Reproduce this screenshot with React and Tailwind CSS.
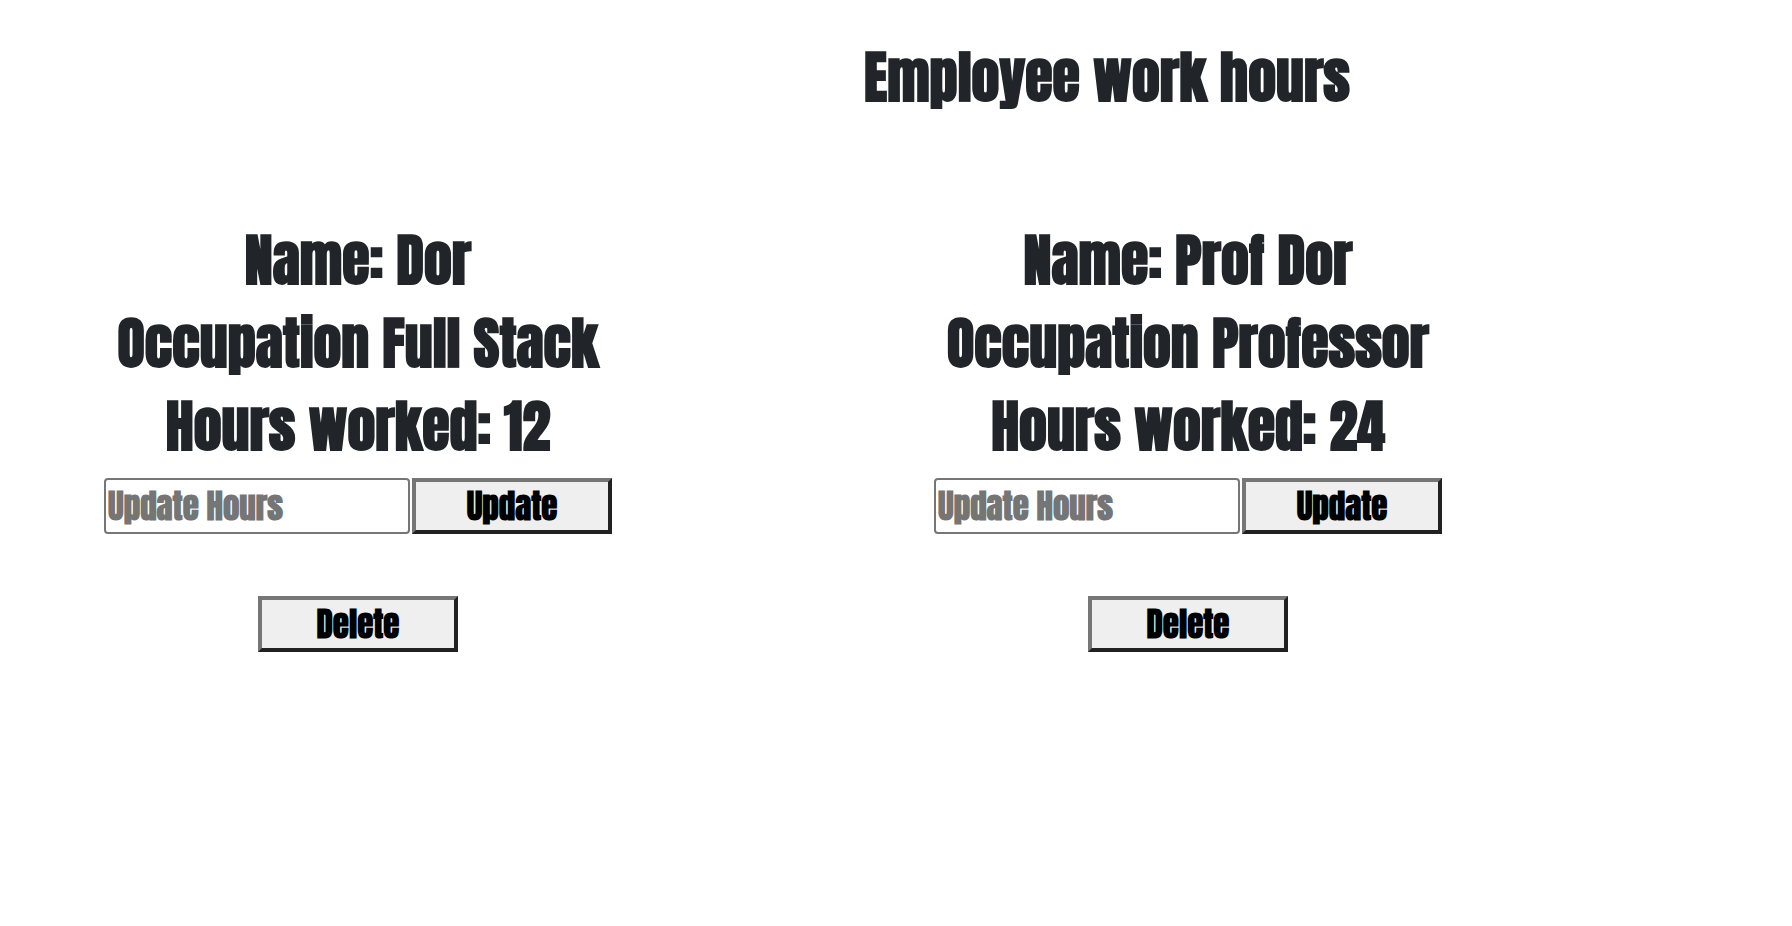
import { useState } from 'react';

const initialEmployees = [
  { id: 1, name: 'Dor', occupation: 'Full Stack', hours: 12 },
  { id: 2, name: 'Prof Dor', occupation: 'Professor', hours: 24 },
];

function ActionButton({ children, ...props }) {
  return (
    <button
      className="h-14 w-[200px] shrink-0 border-4 border-t-[#767676] border-l-[#767676] border-r-[#212121] border-b-[#212121] bg-[#efefef] text-[33px] leading-[48px] text-black"
      {...props}
    >
      {children}
    </button>
  );
}

function EmployeeCard({ employee, onUpdate, onDelete }) {
  const [value, setValue] = useState('');
  const inputId = `hours-${employee.id}`;

  const submit = (event) => {
    event.preventDefault();
    if (value !== '') onUpdate(employee.id, value);
    setValue('');
  };

  return (
    <article className="flex flex-col items-center text-center">
      <h2 className="text-[56px] leading-[83px]">Name: {employee.name}</h2>
      <h2 className="text-[56px] leading-[83px]">Occupation {employee.occupation}</h2>
      <h2 className="text-[56px] leading-[83px]">Hours worked: {employee.hours}</h2>
      <form onSubmit={submit} className="mt-2.5 flex gap-0.5">
        <input
          id={inputId}
          aria-label="Update Hours"
          placeholder="Update Hours"
          value={value}
          onChange={(event) => setValue(event.target.value)}
          className="h-14 w-[306px] rounded-[4px] border-2 border-[#767676] bg-white px-0.5 text-[33px] leading-[48px] text-black placeholder:text-[#757575]"
        />
        <ActionButton type="submit">Update</ActionButton>
      </form>
      <div className="mt-[62px]">
        <ActionButton type="button" onClick={() => onDelete(employee.id)}>
          Delete
        </ActionButton>
      </div>
    </article>
  );
}

export default function App() {
  const [employees, setEmployees] = useState(initialEmployees);

  const updateHours = (id, hours) =>
    setEmployees((list) => list.map((item) => (item.id === id ? { ...item, hours } : item)));
  const remove = (id) => setEmployees((list) => list.filter((item) => item.id !== id));

  return (
    <main className="min-h-screen bg-white pt-9 pb-8 font-[Impact,Anton,'Roboto_Condensed',sans-serif] font-bold text-[#212529]">
      <header className="pl-[422px] text-center">
        <h1 className="text-[56px] leading-[83px]">Employee work hours</h1>
      </header>
      <section className="mt-[100px] flex flex-wrap gap-x-[322px] gap-y-16 pl-[104px]">
        {employees.map((employee) => (
          <EmployeeCard key={employee.id} employee={employee} onUpdate={updateHours} onDelete={remove} />
        ))}
      </section>
    </main>
  );
}
